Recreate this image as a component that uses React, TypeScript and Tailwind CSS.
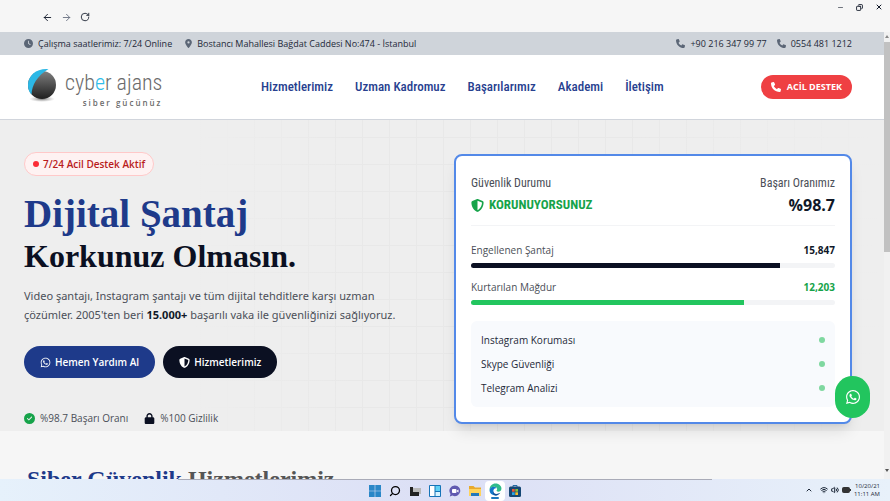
import {
  FaCircleCheck,
  FaClock,
  FaLocationDot,
  FaLock,
  FaPhone,
  FaShieldHalved,
  FaWhatsapp,
} from 'react-icons/fa6'
import { ArrowLeft, ArrowRight, ChevronUp, Copy, Minus, RotateCw, Search, Volume2, Wifi, X } from 'lucide-react'

const NAV = ['Hizmetlerimiz', 'Uzman Kadromuz', 'Başarılarımız', 'Akademi', 'İletişim']

const STATS = [
  { label: 'Engellenen Şantaj', value: '15,847', percent: 85, text: 'text-gray-900', bar: 'bg-[#0b1022]' },
  { label: 'Kurtarılan Mağdur', value: '12,203', percent: 75, text: 'text-[#16a34a]', bar: 'bg-[#22c55e]' },
]

const CHECKS = ['Instagram Koruması', 'Skype Güvenliği', 'Telegram Analizi']

function WindowBar() {
  return (
    <div className="flex h-8 shrink-0 justify-between bg-[#f6f6f6] text-gray-900">
      <div className="flex items-center gap-2 pt-0.5 pl-[42px]">
        <button aria-label="Geri"><ArrowLeft size={11} /></button>
        <button aria-label="İleri" className="text-gray-500"><ArrowRight size={11} /></button>
        <button aria-label="Yenile"><RotateCw size={10} /></button>
      </div>
      <div className="flex h-3.5 items-center gap-3 pr-[7px]">
        <button aria-label="Simge durumuna küçült"><Minus size={7} /></button>
        <button aria-label="Önceki boyut"><Copy size={7} strokeWidth={3} className="-scale-x-100" /></button>
        <button aria-label="Kapat"><X size={8} strokeWidth={3} /></button>
      </div>
    </div>
  )
}

function TopBar() {
  return (
    <div className="flex h-[23px] items-center justify-between bg-[#cfd4da] pr-8 pl-6 text-[9px] text-gray-800">
      <div className="flex items-center gap-3">
        <span className="flex items-center gap-[5px]"><FaClock size={9} className="text-[#5b6676]" />Çalışma saatlerimiz: 7/24 Online</span>
        <span className="flex items-center gap-1"><FaLocationDot size={9} className="text-[#5b6676]" />Bostancı Mahallesi Bağdat Caddesi No:474 - İstanbul</span>
      </div>
      <div className="flex items-center gap-2.5">
        <a href="tel:+902163479977" className="flex items-center gap-[5px]"><FaPhone size={9} className="text-[#5b6676]" />+90 216 347 99 77</a>
        <a href="tel:05544811212" className="flex items-center gap-[5px]"><FaPhone size={9} className="text-[#5b6676]" />0554 481 1212</a>
      </div>
    </div>
  )
}

function Logo() {
  return (
    <a href="#" className="flex items-start pl-[2px]">
      <svg width="33" height="36" viewBox="0 0 33 36" aria-hidden="true">
        <defs>
          <linearGradient id="ball" x1="0" y1="0" x2="0" y2="1">
            <stop offset="0" stopColor="#808080" />
            <stop offset="0.55" stopColor="#4a4a4a" />
            <stop offset="1" stopColor="#1f1f1f" />
          </linearGradient>
          <radialGradient id="shade">
            <stop offset="0" stopColor="#555" stopOpacity="0.8" />
            <stop offset="1" stopColor="#999" stopOpacity="0" />
          </radialGradient>
        </defs>
        <ellipse cx="16" cy="32" rx="13" ry="3" fill="url(#shade)" />
        <circle cx="16" cy="18" r="14" fill="url(#ball)" />
        <path d="M22.500 2C11 1 2 8 2 18c0 4 1 7 3.500 9.500C6 18 11 9 22.500 2Z" fill="#2cb8e6" />
      </svg>
      <span className="flex flex-col items-end pl-1.5">
        <span className="font-['Roboto_Condensed','Roboto',sans-serif] text-[22px] leading-[32px] font-light text-[#6b6b6b]">
          cyb<span className="text-[#2fbdea]">e</span>r ajans
        </span>
        <span className="text-[8px] leading-2 font-semibold tracking-[2px] text-[#6b6b6b]">siber gücünüz</span>
      </span>
    </a>
  )
}

function Header() {
  return (
    <header className="flex h-[65px] items-center border-b border-gray-300 bg-white pr-8 pl-6">
      <div className="w-[237px]">
        <Logo />
      </div>
      <nav className="flex flex-1 gap-[22px] font-['Roboto_Condensed','Roboto',sans-serif] text-[13px] font-medium text-[#27408f]">
        {NAV.map((item) => (
          <a key={item} href="#">{item}</a>
        ))}
      </nav>
      <button className="flex h-6 items-center gap-1.5 rounded-full bg-[#ef4043] px-2.5 text-[9px] font-bold text-white">
        <FaPhone size={10} />
        ACİL DESTEK
      </button>
    </header>
  )
}

function Intro() {
  return (
    <div>
      <div className="flex h-6 w-fit items-center gap-1 rounded-full border border-red-200 bg-red-50 px-2 text-[10px] font-semibold text-[#b91c1c]">
        <span className="size-1.5 rounded-full bg-red-500"></span>
        7/24 Acil Destek Aktif
      </div>
      <h1 className="mt-3.5 font-['Liberation_Serif',serif] font-bold">
        <span className="block text-[39px] leading-[48px] text-[#1e3a8a]">Dijital Şantaj</span>
        <span className="block text-[32px] leading-9 text-[#0b1022]">Korkunuz Olmasın.</span>
      </h1>
      <p className="mt-3 font-['Noto_Sans',sans-serif] text-[11px] leading-[19px] text-[#4b4f58]">
        Video şantajı, Instagram şantajı ve tüm dijital tehditlere karşı uzman çözümler. 2005'ten beri{' '}
        <strong className="font-bold text-gray-900">15.000+</strong> başarılı vaka ile güvenliğinizi sağlıyoruz.
      </p>
      <div className="mt-[22px] flex gap-2 text-[10px] font-semibold text-white">
        <button className="flex h-8 items-center gap-1 rounded-full bg-[#1e3a8a] px-4"><FaWhatsapp size={11} />Hemen Yardım Al</button>
        <button className="flex h-8 items-center gap-1 rounded-full bg-[#0b1022] px-4"><FaShieldHalved size={11} />Hizmetlerimiz</button>
      </div>
      <div className="mt-8 flex gap-4 text-[10px] leading-4 text-[#4b4f58]">
        <span className="flex items-center gap-[5px]"><FaCircleCheck size={11} className="text-[#16a34a]" />%98.7 Başarı Oranı</span>
        <span className="flex items-center gap-[5px]"><FaLock size={11} className="text-[#0b1022]" />%100 Gizlilik</span>
      </div>
    </div>
  )
}

function StatusCard() {
  return (
    <div className="mt-0.5 rounded-lg border-2 border-[#5389e8] bg-white p-[15px] shadow-lg">
      <div className="flex justify-between border-b border-gray-100 pb-2.5 font-['Roboto_Condensed','Roboto',sans-serif]">
        <div>
          <div className="text-[12px] leading-6 text-[#4b4f58]">Güvenlik Durumu</div>
          <div className="flex items-center gap-[5px] text-[13px] leading-5 font-bold text-[#16a34a]">
            <FaShieldHalved size={13} />
            KORUNUYORSUNUZ
          </div>
        </div>
        <div className="text-right">
          <div className="text-[12px] leading-6 text-[#4b4f58]">Başarı Oranımız</div>
          <div className="font-['Open_Sans',sans-serif] text-[16px] leading-5 font-bold text-gray-900">%98.7</div>
        </div>
      </div>
      <div className="mt-3.5 flex flex-col gap-[9px]">
        {STATS.map((s) => (
          <div key={s.label}>
            <div className="flex justify-between text-[10px] leading-5 text-[#4b4f58]">
              <span>{s.label}</span>
              <span className={`font-bold ${s.text}`}>{s.value}</span>
            </div>
            <div className="mt-[3px] h-[5px] overflow-hidden rounded-full bg-gray-100">
              <div className={`h-full ${s.bar}`} style={{ width: `${s.percent}%` }}></div>
            </div>
          </div>
        ))}
      </div>
      <ul className="mt-4 rounded-md bg-[#f8fafd] px-2.5 py-[7px] text-[10px] leading-6 text-gray-800">
        {CHECKS.map((c) => (
          <li key={c} className="flex items-center justify-between">
            {c}
            <span className="size-1.5 rounded-full bg-[#7fd8a0]"></span>
          </li>
        ))}
      </ul>
    </div>
  )
}

function Taskbar() {
  return (
    <div className="relative flex h-[22px] shrink-0 flex-col items-center bg-linear-to-r from-[#e6f1fb] via-[#dcdff5] to-[#e8f1fa]">
      <div className="h-px w-3/5 bg-[#a9abb8]"></div>
      <div className="flex flex-1 items-center gap-2">
        <button aria-label="Başlat">
          <svg width="12" height="12" viewBox="0 0 12 12"><path d="M0 0h5.7v5.7H0zM6.3 0H12v5.7H6.3zM0 6.3h5.7V12H0zM6.3 6.3H12V12H6.3z" fill="#2a87c8" /></svg>
        </button>
        <button aria-label="Ara"><Search size={12} strokeWidth={2.5} className="-scale-x-100" /></button>
        <button aria-label="Görev görünümü">
          <svg width="12" height="12" viewBox="0 0 12 12"><path d="M4 3h8v6H4z" fill="#b9b9b9" /><path d="M1 2h3v5h6v4H1z" fill="#222" /></svg>
        </button>
        <button aria-label="Pencere öğeleri">
          <svg width="12" height="12" viewBox="0 0 12 12"><rect width="12" height="12" rx="1" fill="#1674b8" /><path d="M1 1h4.5v10H1z" fill="#fff" /><path d="M6.5 1H11v5H6.500z" fill="#5ed0f5" /><path d="M6.5 7H11v4H6.500z" fill="#d7f3ff" /></svg>
        </button>
        <button aria-label="Sohbet">
          <svg width="12" height="12" viewBox="0 0 12 12"><path d="M6 .5A5.300 5.300 0 1 1 3.500 10.500L.8 11.500 1.500 9A5.300 5.300 0 0 1 6 .5Z" fill="#6059b0" /><rect x="3" y="4" width="4.500" height="4" rx="1" fill="#fff" /><path d="M8 5.500 9.500 4.500v3L8 6.500Z" fill="#fff" /></svg>
        </button>
        <button aria-label="Dosya Gezgini">
          <svg width="12" height="12" viewBox="0 0 12 12"><path d="M0 1h4.500L6 2.500h6V11H0z" fill="#e8a92c" /><path d="M0 4h12v7H0z" fill="#ffd35c" /><path d="M2 8h8v3H2z" fill="#2377bd" /></svg>
        </button>
        <button aria-label="Edge" className="-mx-1 flex h-5 w-5 flex-col items-center justify-center gap-px rounded-sm bg-white">
          <svg width="13" height="13" viewBox="0 0 24 24">
            <path d="M1 13C1 5 6 1 12 1c7 0 11 5 11 9 0 4-3 6-6 6-2 0-3-1-3-2s1-1 1-3-2-4-5-4c-5 0-8 3-9 6Z" fill="#2fbb8b" />
            <path d="M1 13c1-4 4-6 8-6 3 0 5 2 5 3-4-1-6 2-6 5 0 4 4 7 8 7-1 1-3 1-4 1C6 23 1 19 1 13Z" fill="#1277c9" />
            <path d="M8 15c0 5 6 7 13 3-2 3-5 5-9 5-4-1-6-5-4-8Z" fill="#104f96" />
          </svg>
          <span className="h-0.5 w-2 rounded-full bg-[#1b76bd]"></span>
        </button>
        <button aria-label="Microsoft Store">
          <svg width="12" height="12" viewBox="0 0 12 12"><path d="M4 2V.5h4V2" fill="none" stroke="#246ba5" /><rect y="1.500" width="12" height="10.500" rx="1.500" fill="#154774" /><path d="M3 4h2.700v2.700H3z" fill="#ee5535" /><path d="M6.300 4H9v2.700H6.300z" fill="#82bc3d" /><path d="M3 7.300h2.700V10H3z" fill="#2ba4e4" /><path d="M6.300 7.300H9V10H6.300z" fill="#f7bd2c" /></svg>
        </button>
      </div>
      <div className="absolute inset-y-0 right-2.5 flex items-center gap-[3px] text-[6px] leading-2 text-gray-800">
        <ChevronUp size={8} strokeWidth={3} className="mr-1" />
        <Wifi size={8} strokeWidth={3} />
        <Volume2 size={8} strokeWidth={3} />
        <svg width="9" height="6" viewBox="0 0 9 6"><rect x="0.500" y="0.500" width="7" height="5" rx="1" fill="#333" stroke="#333" /><path d="M8 2h1v2H8z" fill="#333" /></svg>
        <div className="text-right">10/20/21<br />11:11 AM</div>
      </div>
    </div>
  )
}

export default function App() {
  return (
    <div className="relative flex h-screen flex-col overflow-hidden font-['Open_Sans',sans-serif]">
      <WindowBar />
      <div className="flex min-h-0 flex-1">
        <main className="min-w-0 flex-1 overflow-hidden bg-[#f6f6f6]">
          <TopBar />
          <Header />
          <section className="grid grid-cols-2 items-start gap-8 bg-[#eeeeee] bg-[linear-gradient(to_right,#eee_22%,transparent_40%,transparent_70%,#eee),linear-gradient(to_right,#e8e8e8_1px,transparent_1px),linear-gradient(#e8e8e8_1px,transparent_1px)] bg-[size:auto,27px_27px,27px_27px] bg-[position:0_0,11px_17px,11px_17px] pt-8 pr-8 pb-[5px] pl-6">
            <Intro />
            <StatusCard />
          </section>
          <h2 className="px-[27px] pt-8 font-['Liberation_Serif',serif] text-[24px] leading-8 font-bold text-[#555555]">
            <span className="text-[#1e3a8a]">Siber Güvenlik</span> Hizmetlerimiz
          </h2>
        </main>
        <div className="flex w-1.5 flex-col justify-between bg-[#f1f1f1]">
          <div className="flex flex-col items-center">
            <svg width="4" height="10" viewBox="0 0 4 10"><path d="M0 6 2 3 4 6Z" fill="#888" /></svg>
            <div className="h-[210px] w-full bg-[#c1c1c1]"></div>
          </div>
          <svg width="6" height="16" viewBox="0 0 6 16"><path d="M1 6 3 9 5 6Z" fill="#555" /></svg>
        </div>
      </div>
      <Taskbar />
      <button aria-label="WhatsApp" className="absolute right-5 bottom-[83px] flex h-[42px] w-[35px] items-center justify-center rounded-full bg-[#22c55e] text-white">
        <FaWhatsapp size={16} />
      </button>
    </div>
  )
}
